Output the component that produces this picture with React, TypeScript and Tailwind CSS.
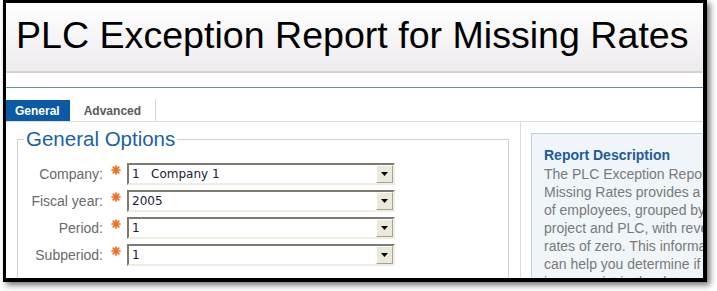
import React from "react";

const fields = [
  { label: "Company:", value: "1   Company 1" },
  { label: "Fiscal year:", value: "2005" },
  { label: "Period:", value: "1" },
  { label: "Subperiod:", value: "1" },
];

function Required() {
  return (
    <svg width="10" height="10" viewBox="0 0 10 10" className="mt-[2px]">
      <g stroke="#f26a1b" strokeWidth="1.7" strokeLinecap="round">
        <line x1="5" y1="1" x2="5" y2="9" />
        <line x1="1" y1="5" x2="9" y2="5" />
        <line x1="2.2" y1="2.2" x2="7.8" y2="7.8" />
        <line x1="7.8" y1="2.2" x2="2.2" y2="7.8" />
      </g>
    </svg>
  );
}

function SelectBox({ value }: { value: string }) {
  return (
    <div className="flex h-[22px] w-[268px] items-stretch border-2 border-t-[#7d7a70] border-l-[#7d7a70] border-b-[#efede4] border-r-[#efede4] bg-white">
      <div className="flex-1 whitespace-pre pl-[3px] text-[12px] leading-[18px] text-[#1c1a3a] [font-family:'DejaVu_Sans',sans-serif]">
        {value}
      </div>
      <div className="flex w-[17px] items-center justify-center border border-t-white border-l-white border-b-[#a7a394] border-r-[#a7a394] bg-[#ece9d8]">
        <svg width="7" height="4" viewBox="0 0 7 4">
          <path d="M0 0 H7 L3.5 4 Z" fill="#000" />
        </svg>
      </div>
    </div>
  );
}

export default function App() {
  return (
    <div className="h-[291px] w-[717px] bg-white pl-[3px] [font-family:'Liberation_Sans',Arial,sans-serif]">
      <div className="h-[282px] w-[704px] overflow-hidden border-[3px] border-r-4 border-b-4 border-black shadow-[3px_3px_6px_rgba(0,0,0,0.55)]">
        {/* Title */}
        <div className="h-[70px] border-b-2 border-[#d5d1d5] bg-gradient-to-b from-white to-[#eeebee] pl-[10px] pt-[14px]">
          <h1 className="whitespace-nowrap text-[37.6px] leading-[37px] text-black">
            PLC Exception Report for Missing Rates
          </h1>
        </div>

        <div className="mt-[14px] h-px bg-[#5b8cc2]" />

        {/* Tabs */}
        <div className="mt-[12px] flex h-[22px] border-b border-[#dcdcdc]">
          <div className="flex h-[21px] items-center bg-[#0b5aa6] pl-[9px] pr-[10px] text-[12px] font-bold text-white">
            General
          </div>
          <div className="-mt-[1px] flex h-[23px] items-center border-r border-[#d6d6d6] px-[14px] text-[12px] font-bold text-[#5a5a5a]">
            Advanced
          </div>
        </div>

        <div className="flex">
          {/* Left column */}
          <div className="w-[515px] shrink-0 border-r border-[#dedede] pl-[11px] pt-[6px]">
            <fieldset className="w-[492px] border border-[#d2d2d2] pb-[40px]">
              <legend className="ml-[6px] px-[2px] text-[20.5px] leading-[22px] text-[#1d5fa5]">
                General Options
              </legend>
              <div className="mt-[13px] flex flex-col gap-[5px]">
                {fields.map((f) => (
                  <div key={f.label} className="flex items-start">
                    <div className="w-[85px] text-right text-[14px] leading-[22px] text-[#6a6a6a]">
                      {f.label}
                    </div>
                    <div className="flex w-[24px] justify-center pl-[2px]">
                      <Required />
                    </div>
                    <SelectBox value={f.value} />
                  </div>
                ))}
              </div>
            </fieldset>
          </div>

          {/* Right column */}
          <div className="pl-[10px] pt-[11px]">
            <div className="w-[260px] border border-[#b9d3e6] bg-[#eff5f9] pl-[12px] pt-[12px] pb-[20px]">
              <div className="whitespace-nowrap text-[14px] font-bold leading-[19px] text-[#1f5b98]">
                Report Description
              </div>
              <p className="whitespace-nowrap text-[14px] leading-[18px] text-[#7a7a7a]">
                The PLC Exception Report for
                <br />
                Missing Rates provides a list
                <br />
                of employees, grouped by
                <br />
                project and PLC, with revenue
                <br />
                rates of zero. This information
                <br />
                can help you determine if
                <br />
                issues exist in the data.
              </p>
            </div>
          </div>
        </div>
      </div>
    </div>
  );
}
